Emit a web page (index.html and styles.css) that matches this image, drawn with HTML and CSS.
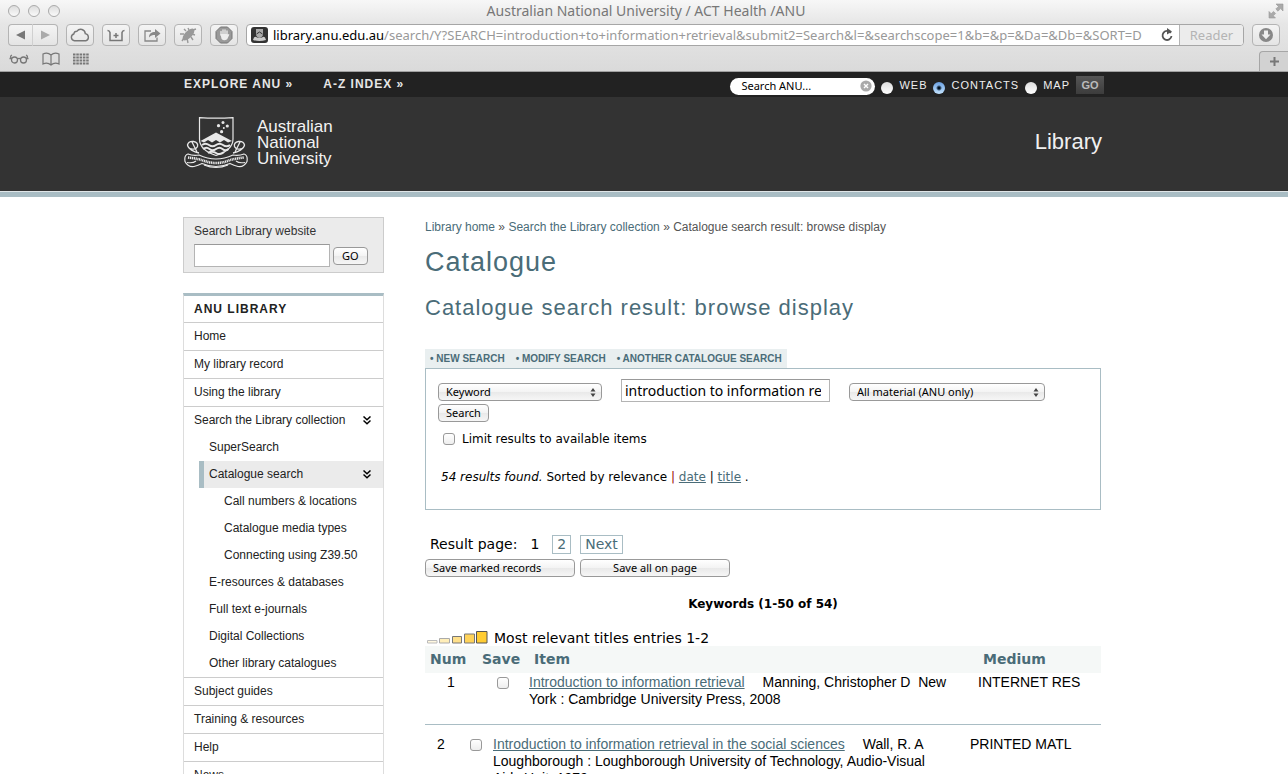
FILE: index.html
```html
<!DOCTYPE html>
<html lang="en">
<head>
<meta charset="utf-8">
<title>Catalogue search result - ANU Library</title>
<link rel="stylesheet" href="styles.css">
</head>
<body>
<header class="chrome">
  <div class="titlebar">
    <div class="lights"><i></i><i></i><i></i></div>
    <div class="window-title">Australian National University / ACT Health /ANU</div>
    <button class="bare fullscreen" aria-label="Full screen"><svg width="16" height="16" viewBox="0 0 16 16"><g fill="#aaa" stroke="#999" stroke-width=".6"><path d="M8 1h7v7l-2.400-2.400L10 8.200 7.800 6l2.600-2.600z"/><path d="M7.500 15h-6.500V8.500l2.200 2.200L5.500 8.400 7.600 10.500 5.300 12.800z"/></g></svg></button>
  </div>
  <div class="toolbar">
    <div class="nav-pair">
      <button class="tool" aria-label="Back"><svg width="10" height="10" viewBox="0 0 10 10"><path d="M0 5L9 .5v9z" fill="#777"/></svg></button>
      <button class="tool" aria-label="Forward"><svg width="10" height="10" viewBox="0 0 10 10"><path d="M10 5L1 .5v9z" fill="#aaa"/></svg></button>
    </div>
    <button class="tool" aria-label="iCloud tabs"><svg width="20" height="14" viewBox="0 0 20 14"><path d="M4.500 12.800a3.500 3.500 0 0 1-.7-6.800 3.200 3.200 0 0 1 3.200-2.800A4.600 4.600 0 0 1 15.300 5.600a3.700 3.700 0 0 1 .4 7.200z" fill="none" stroke="#777" stroke-width="1.400"/></svg></button>
    <button class="tool" aria-label="Save to reading cart"><svg width="18" height="13" viewBox="0 0 18 13"><path d="M.5 1.500q2 0 2.500 2v8h12v-8q.5-2 2.500-2M9 4v5M6.500 6.500h5" fill="none" stroke="#777" stroke-width="1.500"/></svg></button>
    <button class="tool" aria-label="Share"><svg width="17" height="14" viewBox="0 0 17 14"><path d="M7 3H1v10h12V9.500" fill="none" stroke="#888" stroke-width="1.300"/><path d="M5 9.500C5 5.500 7.500 4 11 4V1l5.500 4.500L11 10V7C8.500 7 6.500 7.500 5 9.500z" fill="#888"/></svg></button>
    <button class="tool" aria-label="Debugger"><svg width="20" height="18" viewBox="0 0 20 18"><ellipse cx="10.500" cy="8.500" rx="3.600" ry="7.500" transform="rotate(45 10.500 8.500)" fill="#999"/><path d="M8 5L6 3M6 8L2 8M11 4l-1-2M13 11l2 3M9 12l1 5M14 8l3 1M15 4l3-1M6 12l-2 3" stroke="#999" stroke-width="1.400"/></svg></button>
    <button class="tool" aria-label="Block ads"><svg width="18" height="18" viewBox="0 0 18 18"><path d="M5.500 1h7L17 5.500v7L12.500 17h-7L1 12.500v-7z" fill="#999" stroke="#777"/><path d="M6 9V5.500M8 8V3.800M10 8V3.800M12 9V5" stroke="#eee" stroke-width="1.300" stroke-linecap="round"/><path d="M5.400 8h7.200v1l1-1 .8.600-2.200 4.600Q9 15.500 6.600 13z" fill="#eee"/></svg></button>
    <div class="address">
      <svg class="favicon" width="17" height="16" viewBox="0 0 17 16"><rect width="17" height="16" rx="3" fill="#333"/><path d="M5 2h7v5q0 3-3.500 4Q5 10 5 7z" fill="#aaa"/><path d="M2 13q1-4 3-3 3.500 2 7 0 2-1 3 3-6.500 2-13 0z" fill="#ccc"/><path d="M5.500 7l3-2 3 2" stroke="#333" fill="none"/></svg>
      <div class="url" role="textbox" aria-label="Address" contenteditable="true" spellcheck="false"><span class="host">library.anu.edu.au</span>/search/Y?SEARCH=introduction+to+information+retrieval&amp;submit2=Search&amp;l=&amp;searchscope=1&amp;b=&amp;p=&amp;Da=&amp;Db=&amp;SORT=D</div>
      <button class="bare" aria-label="Reload"><svg width="14" height="14" viewBox="0 0 14 14"><path d="M10.800 5A4.500 4.500 0 1 0 11.500 8" fill="none" stroke="#555" stroke-width="1.800"/><path d="M7 0l5 3.500L7 6.500z" fill="#555"/></svg></button>
      <button class="reader" disabled>Reader</button>
    </div>
    <button class="tool" aria-label="Downloads"><svg width="16" height="16" viewBox="0 0 16 16"><circle cx="8" cy="8" r="7" fill="#888"/><path d="M6 3.500h4v4h2.500L8 12.300 3.500 7.500H6z" fill="#eee"/></svg></button>
  </div>
  <div class="bookmarks">
    <button class="bare" aria-label="Reading list"><svg width="20" height="14" viewBox="0 0 20 14"><g fill="none" stroke="#777" stroke-width="1.300"><circle cx="5.500" cy="8" r="3"/><circle cx="14.500" cy="8" r="3"/><path d="M8.300 7q1.700-1.300 3.400 0M2.500 7Q.5 4 3 3M17.500 7q2-3-.5-4M.5 6.500h2.500M17 6.500h2.500"/></g></svg></button>
    <button class="bare" aria-label="Bookmarks"><svg width="18" height="14" viewBox="0 0 18 14"><path d="M9 3Q5.500 0 1 2v10q4.500-2 8 1 3.500-3 8-1V2Q12.500 0 9 3v9.500" fill="none" stroke="#777" stroke-width="1.200"/></svg></button>
    <button class="bare" aria-label="Top sites"><svg width="16" height="12" viewBox="0 0 16 12"><path d="M0 1.500h16M0 4.500h16M0 7.500h16M0 10.500h16" stroke="#777" stroke-width="2" stroke-dasharray="2.500 .8"/></svg></button>
    <button class="newtab" aria-label="New tab"><svg width="9" height="9" viewBox="0 0 9 9"><path d="M4.500 0v9M0 4.500h9" stroke="#777" stroke-width="2"/></svg></button>
  </div>
</header>

<div class="page">
  <div class="topbar">
    <div class="wrap topbar-row">
      <nav class="top-links"><a href="#">EXPLORE ANU »</a><a href="#">A-Z INDEX »</a></nav>
      <form class="anu-search">
        <div class="pill"><input type="text" aria-label="Search ANU" value="Search ANU..."><button type="button" class="bare" aria-label="Clear"><svg width="12" height="12" viewBox="0 0 12 12"><circle cx="6" cy="6" r="5.600" fill="#aaa"/><path d="M4 4l4 4M8 4L4 8" stroke="#fff" stroke-width="1.400"/></svg></button></div>
        <label><input type="radio" name="scope">WEB</label>
        <label><input type="radio" name="scope" checked>CONTACTS</label>
        <label><input type="radio" name="scope">MAP</label>
        <button type="button" class="go-dark">GO</button>
      </form>
    </div>
  </div>
  <div class="banner">
    <div class="wrap banner-row">
      <a href="#" class="logo">
        <svg width="64" height="52" viewBox="0 0 64 52" fill="none" stroke="#e8e8e8">
          <path d="M15.500.6Q32 1.800 49 .6V22q0 11-17 16.500Q15.500 33 15.500 22z" stroke-width="1.200"/>
          <g fill="#e8e8e8" stroke="none"><circle cx="39" cy="5.500" r="1.500"/><circle cx="34.500" cy="8.700" r="1.600"/><circle cx="43.300" cy="9" r="1.600"/><circle cx="39.800" cy="11" r="1"/><circle cx="37.600" cy="14.700" r="1.600"/>
          <path d="M16.500 24L32 15.500 48 24l-4 1.500-4-2.500-4 2.500-4-2.500-4 2.500-4-2.500-4 2.500z"/></g>
          <path d="M18 28q3.500-2.600 7 0t7 0 7 0 7 0M19 32q3.500-2.600 6.500 0t6.500 0 6.500 0 6 0M24 36q4-2.600 8 0t8-1" stroke-width="1.900"/>
          <path d="M15 36C10 35 4 32 3.500 28q1-4 6-3.500 5 1 4 5-2 4-7 2M8 25l5 10M49 36c5-1 11-4 11.500-8q-1-4-6-3.500-5 1-4 5 2 4 7 2M56 25l-5 10" stroke-width="1.300"/>
          <path d="M4 37Q0 38 1 44.500q3 6 9 5 4-1 8-3 14 6 28 0 4 2 8 3 6 1 9-5Q64 38 60 37q-5 2-11 1-17 8-34 0-6 1-11-1z" fill="#333" stroke-width="1.200"/>
          <path d="M4 40.500q8 1 14 2.500 14 6 28 0 6-1.500 14-2.500" stroke-width="2.600" stroke-dasharray="1.200 .6"/>
          <path d="M3 45.500q6 1 9-1.500M61 45.500q-6 1-9-1.500M20 48q12 5 24 0" stroke-width="1.100"/>
        </svg>
        <span class="logo-name">Australian<br>National<br>University</span>
      </a>
      <div class="site-name">Library</div>
    </div>
  </div>

  <div class="columns">
    <aside class="sidebar">
      <form class="site-search">
        <label for="site-q">Search Library website</label>
        <div class="site-search-row"><input id="site-q" type="text"><button type="button" class="mac-btn">GO</button></div>
      </form>
      <nav class="menu">
        <h2>ANU LIBRARY</h2>
        <ul>
          <li><a href="#">Home</a></li>
          <li><a href="#">My library record</a></li>
          <li><a href="#">Using the library</a></li>
          <li><a href="#">Search the Library collection<svg width="8" height="9" viewBox="0 0 8 9"><path d="M.5.500L4 3.800 7.500.500M.5 4.500L4 7.800 7.500 4.500" fill="none" stroke="#000" stroke-width="1.500"/></svg></a>
            <ul>
              <li><a href="#">SuperSearch</a></li>
              <li><a href="#" class="current">Catalogue search<svg width="8" height="9" viewBox="0 0 8 9"><path d="M.5.500L4 3.800 7.500.500M.5 4.500L4 7.800 7.500 4.500" fill="none" stroke="#000" stroke-width="1.500"/></svg></a>
                <ul>
                  <li><a href="#">Call numbers &amp; locations</a></li>
                  <li><a href="#">Catalogue media types</a></li>
                  <li><a href="#">Connecting using Z39.50</a></li>
                </ul>
              </li>
              <li><a href="#">E-resources &amp; databases</a></li>
              <li><a href="#">Full text e-journals</a></li>
              <li><a href="#">Digital Collections</a></li>
              <li><a href="#">Other library catalogues</a></li>
            </ul>
          </li>
          <li><a href="#">Subject guides</a></li>
          <li><a href="#">Training &amp; resources</a></li>
          <li><a href="#">Help</a></li>
          <li><a href="#">News</a></li>
        </ul>
      </nav>
    </aside>

    <main class="main">
      <div class="crumbs"><a href="#">Library home</a> » <a href="#">Search the Library collection</a> » Catalogue search result: browse display</div>
      <h1>Catalogue</h1>
      <h2 class="subtitle">Catalogue search result: browse display</h2>
      <nav class="tabs"><a href="#">NEW SEARCH</a><a href="#">MODIFY SEARCH</a><a href="#">ANOTHER CATALOGUE SEARCH</a></nav>
      <form class="search-box">
        <div class="fields">
          <span class="mac-select kind"><select aria-label="Search type"><option>Keyword</option></select><svg width="6" height="9" viewBox="0 0 6 9"><path d="M3 0l2.500 3.500h-5zM3 9l2.500-3.500h-5z" fill="#444"/></svg></span>
          <input class="query" type="text" aria-label="Search terms" value="introduction to information retrieval">
          <span class="mac-select scope"><select aria-label="Material"><option>All material (ANU only)</option></select><svg width="6" height="9" viewBox="0 0 6 9"><path d="M3 0l2.500 3.500h-5zM3 9l2.500-3.500h-5z" fill="#444"/></svg></span>
        </div>
        <button type="button" class="mac-btn">Search</button>
        <label class="limit"><input type="checkbox">Limit results to available items</label>
        <p class="found"><em>54 results found.</em> Sorted by relevance <span class="bar-red">|</span> <a href="#">date</a> | <a href="#">title</a> .</p>
      </form>
      <div class="pager">Result page: <span class="here">1</span><a href="#">2</a><a href="#">Next</a></div>
      <div class="actions"><button type="button" class="mac-btn left">Save marked records</button><button type="button" class="mac-btn">Save all on page</button></div>
      <div class="caption">Keywords (1-50 of 54)</div>
      <div class="relevance"><svg width="61" height="16" viewBox="0 0 61 16" stroke="#777"><path d="M.5 10.500h9.500v2.500H.5z" fill="#fff8e0" stroke="#bbb"/><path d="M12.500 8.500h10V13h-10z" fill="#ffeeb8" stroke="#aaa"/><path d="M25.500 6.500h9V13h-9z" fill="#ffe08a"/><path d="M37.500 4h10v9h-10z" fill="#ffd35a"/><path d="M49.500 1.500h10.500V13H49.500z" fill="#fc3" stroke="#555"/></svg>Most relevant titles entries 1-2</div>
      <table class="results first">
        <thead><tr><th class="c-num">Num</th><th class="c-save">Save</th><th>Item</th><th class="c-medium">Medium</th></tr></thead>
        <tbody><tr><td class="num">1</td><td class="mark"><input type="checkbox" aria-label="Save record 1"></td><td class="item"><a href="#">Introduction to information retrieval</a><span class="author">Manning, Christopher D&nbsp; New York : Cambridge University Press, 2008</span></td><td class="medium">INTERNET RES</td></tr></tbody>
      </table>
      <table class="results second">
        <tbody><tr><td class="num c-num">2</td><td class="mark c-save"><input type="checkbox" aria-label="Save record 2"></td><td class="item"><a href="#">Introduction to information retrieval in the social sciences</a><span class="author">Wall, R. A</span><br>Loughborough : Loughborough University of Technology, Audio-Visual Aids Unit, 1979</td><td class="medium c-medium">PRINTED MATL</td></tr></tbody>
      </table>
    </main>
  </div>
</div>
</body>
</html>
```
FILE: styles.css
```css
* { box-sizing: border-box; }
body {
  margin: 0;
  height: 100vh;
  display: flex;
  flex-direction: column;
  overflow: hidden;
  background: #fff;
  font: 12px/16px "Liberation Sans", Arial, sans-serif;
  color: #000;
}
button, input, select { font: 11px/16px "Noto Sans", "Lucida Grande", sans-serif; color: #000; margin: 0; }
svg { display: block; flex: none; }
ul { list-style: none; margin: 0; padding: 0; }
a { color: #4a6c78; }
.bare { border: 0; background: none; padding: 0; }

/* Browser window */
.chrome {
  flex: none;
  height: 72px;
  background: linear-gradient(#f7f7f7, #e6e6e6 24px, #dadada);
  border-bottom: 1px solid #a0a0a0;
  font-family: "Noto Sans", "Lucida Grande", sans-serif;
}
.titlebar { display: flex; align-items: center; justify-content: space-between; height: 24px; padding: 0 4px 2px 8px; }
.lights { display: flex; gap: 8px; width: 60px; }
.lights i { width: 12px; height: 12px; border: 1px solid #aaa; border-radius: 50%; background: linear-gradient(#ddd, #fafafa); }
.window-title { font-size: 14px; color: #777; }
.fullscreen { width: 60px; display: flex; justify-content: flex-end; }
.toolbar { display: flex; gap: 8px; padding: 0 8px; height: 22px; }
.tool {
  display: flex; align-items: center; justify-content: center;
  width: 28px; height: 22px; padding: 0;
  border: 1px solid #b4b4b4; border-radius: 4px;
  background: linear-gradient(#f4f4f4, #e4e4e4);
}
.nav-pair { display: flex; }
.nav-pair .tool { width: 25px; }
.nav-pair .tool:first-child { border-radius: 4px 0 0 4px; border-right-color: #d0d0d0; }
.nav-pair .tool:last-child { border-left: 0; border-radius: 0 4px 4px 0; }
.address {
  flex: 1; min-width: 0; display: flex; align-items: center; gap: 5px;
  border: 1px solid #a6a6a6; border-radius: 4px; background: #fff; padding-left: 4px; overflow: hidden;
}
.url { flex: 1; min-width: 0; font-size: 13px; line-height: 18px; color: #999; white-space: nowrap; overflow: hidden; }
.host { color: #000; }
.reader { align-self: stretch; width: 64px; padding: 0; border: 0; border-left: 1px solid #b4b4b4; background: #ececec; color: #b4b4b4; font-size: 13px; }
.bookmarks { display: flex; align-items: center; gap: 13px; padding-left: 9px; height: 25px; }
.newtab { margin-left: auto; align-self: flex-end; width: 29px; height: 20px; padding: 0; display: flex; align-items: center; justify-content: center; background: #d2d2d2; border: 1px solid #a6a6a6; border-width: 1px 0 0 1px; border-radius: 4px 0 0 0; }

/* Site header */
.page { flex: 1; min-height: 0; overflow: hidden; }
.wrap { max-width: 920px; margin: 0 auto; }
.topbar { background: #222; }
.topbar-row { display: flex; justify-content: space-between; height: 25px; }
.top-links { display: flex; gap: 30px; }
.top-links a { font-weight: bold; line-height: 24px; letter-spacing: 1px; color: #e6e6e6; text-decoration: none; }
.anu-search { display: flex; align-items: center; gap: 6px; }
.anu-search label { display: flex; align-items: center; gap: 6px; font-size: 11px; letter-spacing: 1px; color: #eee; }
.pill { display: flex; align-items: center; width: 145px; height: 17px; border-radius: 9px; background: #fff; padding: 0 3px 0 11px; margin-top: 3px; }
.pill input { flex: 1; min-width: 0; height: 16px; border: 0; padding: 0; background: none; }
input[type="radio"] { appearance: none; width: 12px; height: 12px; border-radius: 50%; background: linear-gradient(#ddd, #fff); margin-top: 6px; }
input[type="radio"]:checked { background: radial-gradient(circle, #012 1px, transparent 3px), linear-gradient(#6a9fe0, #c4e4ff); }
.go-dark { width: 28px; height: 18px; padding: 0; border: 0; background: linear-gradient(#555, #3c3c3c); color: #bbb; font: bold 11px/18px "Liberation Sans", sans-serif; }
.banner { background: #333; border-bottom: 5px solid #a9bdc4; box-shadow: inset 0 -1px #e0e6e8; }
.banner-row { display: flex; justify-content: space-between; height: 95px; padding: 20px 2px 0 0; }
.logo { display: flex; gap: 9px; text-decoration: none; height: 52px; }
.logo-name { font-size: 17px; line-height: 16px; padding-top: 2px; color: #f2f2f2; }
.site-name { font-size: 22px; line-height: 24px; padding-top: 13px; color: #f0f0f0; }

/* Sidebar */
.columns { display: flex; gap: 41px; max-width: 922px; margin: 0 auto; padding: 20px 4px 0 0; }
.sidebar { flex: none; width: 201px; color: #333; }
.site-search { background: #ebebeb; border: 1px solid #ccc; height: 56px; padding: 5px 10px; }
.site-search-row { display: flex; align-items: center; gap: 3px; padding-top: 5px; }
.site-search input { width: 136px; height: 23px; border: 1px solid #b4b4b4; border-top-color: #999; background: #fff; }
.mac-btn { height: 18px; padding: 0 7px; border: 1px solid #999; border-radius: 4px; background: linear-gradient(#fff, #f3f3f3 50%, #e9e9e9 51%, #f6f6f6); line-height: 14px; }
.site-search .mac-btn { padding: 0 8px; }
.menu { margin-top: 20px; border: 1px solid #ddd; border-top: 3px solid #a9bdc4; }
.menu h2 { margin: 0; padding: 0 10px; font-size: 12px; line-height: 26px; letter-spacing: 1px; color: #222; }
.menu li a { display: flex; align-items: center; justify-content: space-between; padding: 0 12px 0 10px; line-height: 27px; color: #222; text-decoration: none; }
.menu > ul > li { border-top: 1px solid #ccc; }
.menu ul ul { padding-left: 15px; }
.menu li a.current { background: #ebebeb; border-left: 5px solid #a9bdc4; padding-left: 5px; }

/* Main column */
.main { flex: 1; min-width: 0; font-family: "DejaVu Sans", Verdana, sans-serif; }
.crumbs { font-family: "Liberation Sans", Arial, sans-serif; color: #555; line-height: 20px; }
.crumbs a, .tabs a, .pager a { text-decoration: none; }
h1, .subtitle { margin: 0; font-weight: normal; font-family: "Liberation Sans", Arial, sans-serif; letter-spacing: 1px; color: #4a6c78; }
h1 { font-size: 27px; line-height: 32px; padding-top: 9px; }
.subtitle { font-size: 22px; line-height: 28px; padding: 16px 0 27px; }
.tabs { display: inline-flex; gap: 11px; background: #e9eff0; padding: 0 5px; height: 19px; vertical-align: top; }
.tabs a { font: bold 10px/19px "Liberation Sans", Arial, sans-serif; }
.tabs a::before { content: "• "; }
.search-box { border: 1px solid #a9bdc4; height: 142px; padding: 10px 12px; }
.fields { display: flex; align-items: center; gap: 19px; height: 23px; }
.mac-select { position: relative; display: flex; margin-top: 3px; }
.mac-select svg { position: absolute; right: 6px; top: 5px; }
.mac-select select { appearance: none; width: 100%; height: 18px; padding: 0 7px; border: 1px solid #999; border-radius: 4px; background: linear-gradient(#fff, #f3f3f3 50%, #e9e9e9 51%, #f6f6f6); line-height: 14px; }
.kind { width: 164px; }
.scope { width: 196px; }
.query { width: 209px; height: 23px; padding: 0 8px 0 3px; border: 1px solid #b4b4b4; border-top-color: #999; font-size: 14px; line-height: 20px; }
.search-box .mac-btn { display: block; margin-top: 2px; }
input[type="checkbox"] { appearance: none; width: 12px; height: 12px; border: 1px solid #999; border-radius: 3px; background: linear-gradient(#fff, #eee); }
.limit { display: flex; align-items: center; gap: 7px; padding: 9px 5px 0; }
.found { margin: 22px 0 0 3px; }
.bar-red { color: #900; }
.pager { display: flex; align-items: center; height: 20px; margin-top: 24px; padding-left: 5px; font-size: 14px; }
.here { margin: 0 13px; }
.pager a { border: 1px solid #a9bdc4; padding: 0 4px; line-height: 17px; margin-right: 9px; }
.actions { display: flex; gap: 5px; margin-top: 5px; }
.actions .mac-btn { width: 150px; }
.actions .left { text-align: left; }
.caption { margin-top: 19px; text-align: center; font-weight: bold; }
.relevance { display: flex; align-items: center; gap: 6px; font-size: 14px; line-height: 16px; margin-top: 18px; padding-left: 2px; }
.results { width: 100%; table-layout: fixed; border-collapse: collapse; font: 14px/17px "Liberation Sans", Arial, sans-serif; }
.results th { background: #f5f8f7; color: #4a6c78; text-align: left; padding: 0 5px; line-height: 27px; font-family: "DejaVu Sans", Verdana, sans-serif; }
.results td { vertical-align: top; padding: 1px 0 0; }
.mark input { display: block; margin-top: 3px; }
.author { margin-left: 18px; }
.first .c-num, .first .c-save { width: 52px; }
.first .c-medium { width: 123px; }
.first .num { text-align: center; }
.first .mark input { margin-left: 20px; }
.first td { padding-bottom: 16px; }
.second { border-top: 1px solid #a9bdc4; }
.second td { padding-top: 11px; }
.second .c-num { width: 45px; padding-left: 12px; }
.second .c-save { width: 23px; }
.second .c-medium { width: 131px; }
.results .item { padding-right: 20px; }
```
